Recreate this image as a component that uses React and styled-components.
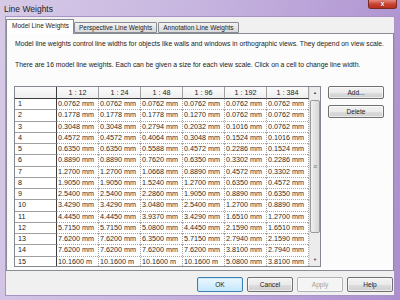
import React from 'react'
import styled, { createGlobalStyle } from 'styled-components'

const GlobalStyle = createGlobalStyle`
  html, body { margin: 0; padding: 0; }
  body {
    width: 400px;
    height: 300px;
    overflow: hidden;
    font-family: "Liberation Sans", Arial, sans-serif;
  }
  * { box-sizing: border-box; }
`

const scales = ['1 : 12', '1 : 24', '1 : 48', '1 : 96', '1 : 192', '1 : 384']

const rows = [
  ['0.0762', '0.0762', '0.0762', '0.0762', '0.0762', '0.0762'],
  ['0.1778', '0.1778', '0.1778', '0.1270', '0.0762', '0.0762'],
  ['0.3048', '0.3048', '0.2794', '0.2032', '0.1016', '0.0762'],
  ['0.4572', '0.4572', '0.4064', '0.3048', '0.1524', '0.1016'],
  ['0.6350', '0.6350', '0.5588', '0.4572', '0.2286', '0.1524'],
  ['0.8890', '0.8890', '0.7620', '0.6350', '0.3302', '0.2286'],
  ['1.2700', '1.2700', '1.0668', '0.8890', '0.4572', '0.3302'],
  ['1.9050', '1.9050', '1.5240', '1.2700', '0.6350', '0.4572'],
  ['2.5400', '2.5400', '2.2860', '1.9050', '0.8890', '0.6350'],
  ['3.4290', '3.4290', '3.0480', '2.5400', '1.2700', '0.8890'],
  ['4.4450', '4.4450', '3.9370', '3.4290', '1.6510', '1.2700'],
  ['5.7150', '5.7150', '5.0800', '4.4450', '2.1590', '1.6510'],
  ['7.6200', '7.6200', '6.3500', '5.7150', '2.7940', '2.1590'],
  ['7.6200', '7.6200', '7.6200', '7.6200', '3.8100', '2.7940'],
  ['10.1600', '10.1600', '10.1600', '10.1600', '5.0800', '3.8100'],
]

const label = (v, j) => (v.length > 6 && j < 4 ? v + ' m' : v + ' mm')

function App() {
  return (
    <>
      <GlobalStyle />
      <Window>
        <TitleBar>
          <Title>Line Weights</Title>
          <CloseButton>x</CloseButton>
        </TitleBar>
        <Client>
          <TabStrip>
            <Tab $active>Model Line Weights</Tab>
            <Tab>Perspective Line Weights</Tab>
            <Tab>Annotation Line Weights</Tab>
          </TabStrip>
          <Panel>
            <Note>Model line weights control line widths for objects like walls and windows in orthographic views. They depend on view scale.</Note>
            <Note $gap>There are 16 model line weights. Each can be given a size for each view scale. Click on a cell to change line width.</Note>
            <TableRow>
              <GridFrame>
                <Grid>
                  <Corner />
                  {scales.map(s => <ColHead key={s}>{s}</ColHead>)}
                  {rows.map((r, i) => (
                    <React.Fragment key={i}>
                      <RowHead>{i + 1}</RowHead>
                      {r.map((v, j) => (
                        <Cell key={j}>{label(v, j)}</Cell>
                      ))}
                    </React.Fragment>
                  ))}
                </Grid>
                <ScrollBar>
                  <Arrow>▲</Arrow>
                  <Track>
                    <Thumb>≡</Thumb>
                  </Track>
                  <Arrow>▼</Arrow>
                </ScrollBar>
              </GridFrame>
              <SideButtons>
                <Button>Add...</Button>
                <Button>Delete</Button>
              </SideButtons>
            </TableRow>
          </Panel>
          <Footer>
            <Button $default $wide>OK</Button>
            <Button $wide>Cancel</Button>
            <Button $wide $disabled>Apply</Button>
            <Button $wide>Help</Button>
          </Footer>
        </Client>
      </Window>
    </>
  )
}

export default App

const Window = styled.div`
  width: 400px;
  height: 300px;
  display: flex;
  flex-direction: column;
  background: linear-gradient(100deg, #d6cae7 0%, #c6b4df 45%, #ab8ecf 100%);
`

const TitleBar = styled.div`
  height: 16px;
  display: flex;
  justify-content: space-between;
  padding: 0 3px 0 4px;
`

const Title = styled.div`
  align-self: center;
  font-size: 8.5px;
  color: #1e1e1e;
  margin-top: 1px;
`

const CloseButton = styled.div`
  width: 29px;
  height: 9px;
  border: 1px solid #7a2a22;
  border-top: none;
  border-radius: 0 0 3px 3px;
  background: linear-gradient(#e58a7c, #c8402f 55%, #b8321f);
  color: #fff;
  font-size: 7px;
  font-weight: bold;
  line-height: 7px;
  text-align: center;
  text-shadow: 0 0 2px #5a1008;
`

const Client = styled.div`
  flex: 1;
  margin: 0 5px 4px 5px;
  background: #f0f0f0;
  border: 1px solid #a892c6;
  padding: 2px 0 0 0;
  display: flex;
  flex-direction: column;
`

const TabStrip = styled.div`
  height: 14px;
  display: flex;
  align-items: flex-end;
  padding-left: 2px;
`

const Tab = styled.div`
  position: relative;
  height: ${p => (p.$active ? '15px' : '11px')};
  margin: ${p => (p.$active ? '0 -1px -1px -2px' : '0 0 0 1px')};
  padding: ${p => (p.$active ? '2px 4px 0 5px' : '1px 4px 0 4px')};
  z-index: ${p => (p.$active ? 1 : 0)};
  border: 1px solid #898c95;
  border-bottom: ${p => (p.$active ? 'none' : '1px solid #898c95')};
  border-radius: 1px 1px 0 0;
  background: ${p => (p.$active ? '#ffffff' : 'linear-gradient(#f3f3f3, #e6e6e6 50%, #d9d9d9)')};
  font-size: 6.5px;
  line-height: 8px;
  color: #222;
  white-space: nowrap;
`

const Panel = styled.div`
  height: 238px;
  border: 1px solid #898c95;
  background: #fcfcfc;
  padding: 5px 8px 0 7px;
  display: flex;
  flex-direction: column;
`

const Note = styled.div`
  font-size: 6.8px;
  line-height: 9px;
  color: #222;
  padding-left: 1px;
  margin-top: ${p => (p.$gap ? '12px' : '0')};
  white-space: nowrap;
`

const TableRow = styled.div`
  display: flex;
  align-items: flex-start;
  gap: 7px;
  margin-top: 17px;
`

const GridFrame = styled.div`
  display: flex;
  height: 181px;
  border: 1px solid #828790;
  background: #fff;
  overflow: hidden;
`

const Grid = styled.div`
  display: grid;
  grid-template-columns: 42px repeat(6, 42px);
  grid-template-rows: 12px;
  grid-auto-rows: 11.25px;
  align-content: start;
  font-size: 7.2px;
  color: #222;
`

const Corner = styled.div`
  background: linear-gradient(#fbfbfb, #eeeeee);
  border-right: 1px solid #3c3c3c;
  border-bottom: 1px solid #3c3c3c;
`

const ColHead = styled.div`
  background: linear-gradient(#fbfbfb, #eeeeee);
  border-right: 1px solid #a0a0a0;
  border-bottom: 1px solid #3c3c3c;
  text-align: center;
  line-height: 11px;
`

const RowHead = styled.div`
  border-right: 1px solid #3c3c3c;
  border-bottom: 1px solid #a0a0a0;
  padding-left: 3px;
  line-height: 10px;
`

const Cell = styled.div`
  padding-left: 1px;
  line-height: 10px;
  white-space: nowrap;
  overflow: hidden;
  color: #2a2a2a;
  background:
    repeating-linear-gradient(to bottom, #a4a4a4 0 1px, transparent 1px 2px) right top / 1px 100% no-repeat,
    repeating-linear-gradient(to right, #a4a4a4 0 1px, transparent 1px 2px) left bottom / 100% 1px no-repeat,
    #ffffff;
`

const ScrollBar = styled.div`
  width: 11px;
  display: flex;
  flex-direction: column;
  background: #ececec;
  border-left: 1px solid #e0e0e0;
`

const Arrow = styled.div`
  height: 12px;
  font-size: 4px;
  line-height: 12px;
  text-align: center;
  color: #444;
`

const Track = styled.div`
  flex: 1;
  padding-bottom: 21px;
  display: flex;
`

const Thumb = styled.div`
  flex: 1;
  margin-top: 1px;
  border: 1px solid #9a9a9a;
  border-radius: 2px;
  background: linear-gradient(90deg, #f2f2f2, #e2e2e2 50%, #d6d6d6);
  display: flex;
  align-items: center;
  justify-content: center;
  font-size: 7px;
  color: #777;
`

const SideButtons = styled.div`
  display: flex;
  flex-direction: column;
  gap: 6px;
`

const Button = styled.div`
  width: ${p => (p.$wide ? '46px' : '56px')};
  height: ${p => (p.$wide ? '15px' : '13px')};
  border: 1px solid ${p => (p.$default ? '#3c7fb1' : p.$disabled ? '#adb2b5' : '#707070')};
  border-radius: 2px;
  background: ${p => (p.$disabled ? '#f4f4f4' : p.$default ? 'linear-gradient(#eaf6fd, #d9f0fc 50%, #bee6fd)' : 'linear-gradient(#f2f2f2, #ebebeb 50%, #dddddd 51%, #cfcfcf)')};
  box-shadow: inset 0 0 0 1px ${p => (p.$default ? '#cdeafb' : 'rgba(255,255,255,0.6)')};
  font-size: 6.6px;
  line-height: ${p => (p.$wide ? '13px' : '11px')};
  text-align: center;
  color: ${p => (p.$disabled ? '#a0a0a0' : '#222')};
`

const Footer = styled.div`
  display: flex;
  justify-content: flex-end;
  gap: 4px;
  padding: 6px 1px 0 0;
`
